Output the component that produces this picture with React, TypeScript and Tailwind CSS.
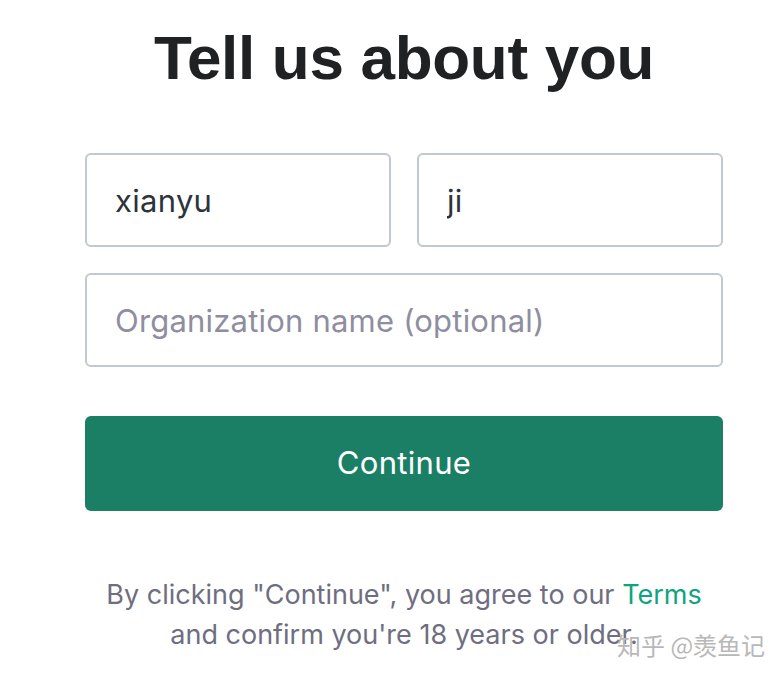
import React from "react";

export default function App() {
  return (
    <div className="min-h-[680px] w-full bg-white flex justify-center pl-[24px]" style={{ fontFamily: "Inter, 'Liberation Sans', sans-serif" }}>
      <div className="w-[638px] flex flex-col items-center">
        <h1 className="mt-[18px] h-[80px] flex items-center text-[62px] font-bold leading-none tracking-[-0.3px] text-[#202123]" style={{ fontFamily: "'Liberation Sans', Arial, sans-serif" }}>
          Tell us about you
        </h1>
        <div className="mt-[55px] w-full flex flex-col gap-[26px]">
          <div className="flex gap-[26px]">
            <input
              defaultValue="xianyu"
              className="h-[94px] w-[306px] rounded-[6px] border-2 border-[#c2c8d0] px-[28px] text-[31px] tracking-[0.3px] text-[#2d333a] outline-none"
            />
            <input
              defaultValue="ji"
              className="h-[94px] w-[306px] rounded-[6px] border-2 border-[#c2c8d0] px-[28px] text-[31px] tracking-[0.3px] text-[#2d333a] outline-none"
            />
          </div>
          <input
            placeholder="Organization name (optional)"
            className="h-[94px] w-full rounded-[6px] border-2 border-[#c2c8d0] px-[28px] text-[31px] tracking-[0.2px] text-[#2d333a] placeholder:text-[#8e8ea0] outline-none"
          />
        </div>
        <button className="mt-[49px] h-[95px] w-full rounded-[6px] bg-[#1a7f64] text-[31px] tracking-[0.3px] text-white">
          Continue
        </button>
        <p className="mt-[64px] text-center text-[27px] leading-[40px] text-[#6e6e80]">
          By clicking "Continue", you agree to our <span className="text-[#10a37f]">Terms</span>
          <br />
          and confirm you're 18 years or older.
        </p>
      </div>
      <div className="absolute left-[617px] top-[627px] text-[24px] text-[#b8b8b8]" style={{ fontFamily: "'Noto Sans CJK SC', sans-serif" }}>
        知乎 @羡鱼记
      </div>
    </div>
  );
}
